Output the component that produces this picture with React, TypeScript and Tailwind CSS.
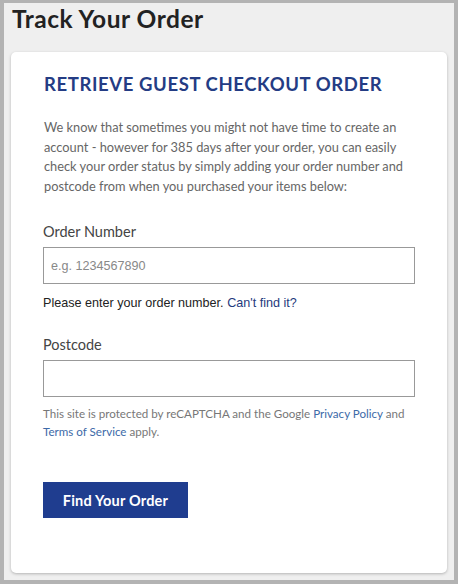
import React from "react";

const TrackOrder = () => {
  return (
    <div className="w-[458px] h-[584px] bg-[#efefef] border-[#b3b3b3] border-x-4 border-t-[3px] border-b-4 box-border overflow-hidden">
      <h1 className="pl-[8px] pt-[2px] text-[24.5px] leading-[28px] font-bold tracking-[0.5px] text-[#222] font-['Lato',sans-serif]">
        Track Your Order
      </h1>
      <div className="mx-[7px] mt-[19px] h-[521px] bg-white rounded-[5px] shadow-[0_1px_3px_rgba(0,0,0,0.25)] pl-[32px] pr-[31px] pt-[20px]">
        <h2 className="ml-[1px] text-[18.5px] leading-[24px] font-bold text-[#243c84] tracking-[0.6px] font-['Lato',sans-serif]">
          RETRIEVE GUEST CHECKOUT ORDER
        </h2>
        <p className="ml-[1px] mt-[22px] text-[12.8px] leading-[19.6px] text-[#666] font-['Lato',sans-serif]">
          We know that sometimes you might not have time to create an account - however for 385 days after your order, you can easily check your order status by simply adding your order number and postcode from when you purchased your items below:
        </p>

        <label className="block mt-[26px] text-[14.5px] leading-[20px] text-[#444] font-['Lato',sans-serif]">
          Order Number
        </label>
        <input
          type="text"
          placeholder="e.g. 1234567890"
          className="block mt-[5px] w-[372px] h-[37px] border border-[#999] px-[7px] text-[12.6px] text-[#333] placeholder:text-[#888] font-['Liberation_Sans',Arial,sans-serif] outline-none"
        />
        <p className="mt-[9px] text-[12.6px] leading-[20px] text-[#222] font-['Liberation_Sans',Arial,sans-serif]">
          Please enter your order number.{" "}
          <a className="text-[#1f3a7d] cursor-pointer">Can't find it?</a>
        </p>

        <label className="block mt-[22px] text-[14.5px] leading-[20px] text-[#444] font-['Lato',sans-serif]">
          Postcode
        </label>
        <input
          type="text"
          className="block mt-[5px] w-[372px] h-[37px] border border-[#999] px-[7px] text-[12.6px] font-['Liberation_Sans',Arial,sans-serif] outline-none"
        />
        <p className="mt-[8px] text-[11.6px] leading-[18px] text-[#777] font-['Lato',sans-serif]">
          This site is protected by reCAPTCHA and the Google{" "}
          <a className="text-[#3d6aa8] cursor-pointer">Privacy Policy</a> and{" "}
          <a className="text-[#3d6aa8] cursor-pointer">Terms of Service</a> apply.
        </p>

        <button className="mt-[41px] w-[145px] h-[36px] bg-[#1f3d8f] text-white text-[14.5px] font-bold tracking-[0.2px] font-['Lato',sans-serif]">
          Find Your Order
        </button>
      </div>
    </div>
  );
};

export default function App() {
  return <TrackOrder />;
}
